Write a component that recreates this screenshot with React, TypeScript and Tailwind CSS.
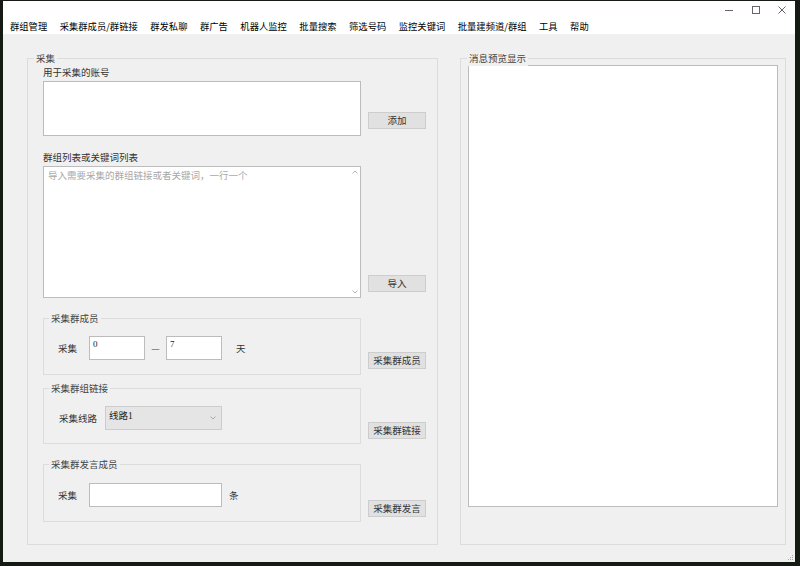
import React from "react";

const cjk = { fontFamily: '"Noto Sans CJK SC", "Noto Sans", sans-serif' };
const serif = { fontFamily: '"Liberation Serif", "Noto Sans CJK SC", serif' };

const Btn = ({ label, className = "" }: { label: string; className?: string }) => (
  <div
    className={`w-[58px] h-[17px] shrink-0 flex items-center justify-center bg-[#e1e1e1] border border-[#cdcdcd] text-[9.5px] text-[#333] ${className}`}
  >
    {label}
  </div>
);

const Group = ({
  title,
  className = "",
  children,
}: {
  title: string;
  className?: string;
  children?: React.ReactNode;
}) => (
  <div className={`relative border border-[#dcdcdc] ${className}`}>
    <span className="absolute left-[5px] top-[-9px] px-[2px] bg-[#f0f0f0] leading-[16px] text-[9.5px] text-[#444]">
      {title}
    </span>
    {children}
  </div>
);

const menu = [
  "群组管理",
  "采集群成员/群链接",
  "群发私聊",
  "群广告",
  "机器人监控",
  "批量搜索",
  "筛选号码",
  "监控关键词",
  "批量建频道/群组",
  "工具",
  "帮助",
];

const TitleBar = () => (
  <div className="h-[17px] bg-white flex justify-end">
    <div className="w-[27px] flex items-center justify-center">
      <svg width="10" height="10" viewBox="0 0 10 10">
        <line x1="1" y1="5.5" x2="9" y2="5.5" stroke="#666" strokeWidth="1" />
      </svg>
    </div>
    <div className="w-[27px] flex items-center justify-center">
      <svg width="10" height="10" viewBox="0 0 10 10">
        <rect x="1.5" y="1.5" width="7" height="7" fill="none" stroke="#666" strokeWidth="1" />
      </svg>
    </div>
    <div className="w-[26px] flex items-center justify-center">
      <svg width="10" height="10" viewBox="0 0 10 10">
        <path d="M1.5 1.5 L8.5 8.5 M8.5 1.5 L1.5 8.5" stroke="#666" strokeWidth="1" />
      </svg>
    </div>
  </div>
);

const App = () => {
  return (
    <div className="w-[800px] h-[566px] bg-[#161a15] pl-[3px] pt-[1px] overflow-hidden" style={cjk}>
      <div className="w-[792px] h-[561px] bg-[#f0f0f0] flex flex-col">
        <TitleBar />
        <div className="h-[16px] bg-white flex items-center gap-[12.5px] pl-[7px] text-[9.3px] text-black">
          {menu.map((m, i) => (
            <span key={i} className="leading-[16px] whitespace-nowrap">
              {m}
            </span>
          ))}
        </div>

        <div className="flex pt-[24px] pl-[24px] gap-[22px]">
          {/* left group */}
          <div className="relative w-[411px] h-[487px] border border-[#dcdcdc]">
            <span className="absolute left-[6px] top-[-9px] px-[2px] bg-[#f0f0f0] leading-[16px] text-[9.5px] text-[#444]">
              采集
            </span>
            <div className="flex flex-col pl-[15px] text-[9.5px] text-[#333]">
              <div className="mt-[5px] leading-[16px]">用于采集的账号</div>
              <div className="mt-[1px] flex gap-[7px]">
                <div className="w-[318px] h-[55px] bg-white border border-[#bcbcbc]" />
                <Btn label="添加" className="mt-[31px]" />
              </div>

              <div className="mt-[13px] leading-[16px]">群组列表或关键词列表</div>
              <div className="mt-[1px] flex gap-[7px]">
                <div className="w-[318px] h-[132px] bg-white border border-[#bcbcbc] flex">
                  <div className="flex-1 pl-[4px] pt-[1px] leading-[14px] text-[#a8a8a8]">
                    导入需要采集的群组链接或者关键词，一行一个
                  </div>
                  <div className="w-[10px] flex flex-col justify-between items-center py-[3px]">
                    <svg width="6" height="4" viewBox="0 0 6 4">
                      <path d="M0.5 3.5 L3 1 L5.5 3.5" fill="none" stroke="#b5b5b5" strokeWidth="1" />
                    </svg>
                    <svg width="6" height="4" viewBox="0 0 6 4">
                      <path d="M0.5 0.5 L3 3 L5.5 0.5" fill="none" stroke="#b5b5b5" strokeWidth="1" />
                    </svg>
                  </div>
                </div>
                <Btn label="导入" className="mt-[109px]" />
              </div>

              <div className="mt-[20px] flex gap-[7px]">
                <Group title="采集群成员" className="w-[318px] h-[57px]">
                  <div className="flex items-center pl-[14px] pt-[17px]">
                    <span>采集</span>
                    <div className="ml-[12px] w-[56px] h-[24px] bg-white border border-[#bcbcbc] pl-[3px] pt-[1px] leading-[12px] text-[9px] text-[#222]" style={serif}>
                      0
                    </div>
                    <span className="w-[21px] text-center text-[#555]">—</span>
                    <div className="w-[56px] h-[24px] bg-white border border-[#bcbcbc] pl-[3px] pt-[1px] leading-[12px] text-[9px] text-[#222]" style={serif}>
                      7
                    </div>
                    <span className="ml-[14px]">天</span>
                  </div>
                </Group>
                <Btn label="采集群成员" className="mt-[34px]" />
              </div>

              <div className="mt-[13px] flex gap-[7px]">
                <Group title="采集群组链接" className="w-[318px] h-[56px]">
                  <div className="flex items-center pl-[15px] pt-[17px]">
                    <span>采集线路</span>
                    <div className="ml-[8px] w-[117px] h-[24px] bg-[#e5e5e5] border border-[#cccccc] flex items-center justify-between pl-[3px] pr-[5px]">
                      <span className="text-[#222] leading-[12px] self-start pt-[3px]" style={serif}>
                        线路1
                      </span>
                      <svg width="6" height="4" viewBox="0 0 6 4">
                        <path d="M0.5 0.5 L3 3 L5.5 0.5" fill="none" stroke="#999" strokeWidth="0.8" />
                      </svg>
                    </div>
                  </div>
                </Group>
                <Btn label="采集群链接" className="mt-[34px]" />
              </div>

              <div className="mt-[20px] flex gap-[7px]">
                <Group title="采集群发言成员" className="w-[318px] h-[58px]">
                  <div className="flex items-center pl-[14px] pt-[18px]">
                    <span>采集</span>
                    <div className="ml-[12px] w-[133px] h-[24px] bg-white border border-[#bcbcbc]" />
                    <span className="ml-[7px]">条</span>
                  </div>
                </Group>
                <Btn label="采集群发言" className="mt-[36px]" />
              </div>
            </div>
          </div>

          {/* right group */}
          <div className="relative w-[326px] h-[487px] border border-[#dcdcdc]">
            <span className="absolute left-[6px] top-[-9px] px-[2px] bg-[#f0f0f0] leading-[16px] text-[9.5px] text-[#444]">
              消息预览显示
            </span>
            <div className="mt-[6px] mx-[7px] h-[442px] bg-white border border-[#bcbcbc]" />
          </div>
        </div>

        <div className="flex-1 flex justify-end items-end pr-[1px] pb-[1px]">
          <svg width="6" height="6" viewBox="0 0 6 6">
            <rect x="4" y="0" width="1" height="1" fill="#aaa" />
            <rect x="2" y="2" width="1" height="1" fill="#aaa" />
            <rect x="4" y="2" width="1" height="1" fill="#aaa" />
            <rect x="0" y="4" width="1" height="1" fill="#aaa" />
            <rect x="2" y="4" width="1" height="1" fill="#aaa" />
            <rect x="4" y="4" width="1" height="1" fill="#aaa" />
          </svg>
        </div>
      </div>
    </div>
  );
};

export default App;
